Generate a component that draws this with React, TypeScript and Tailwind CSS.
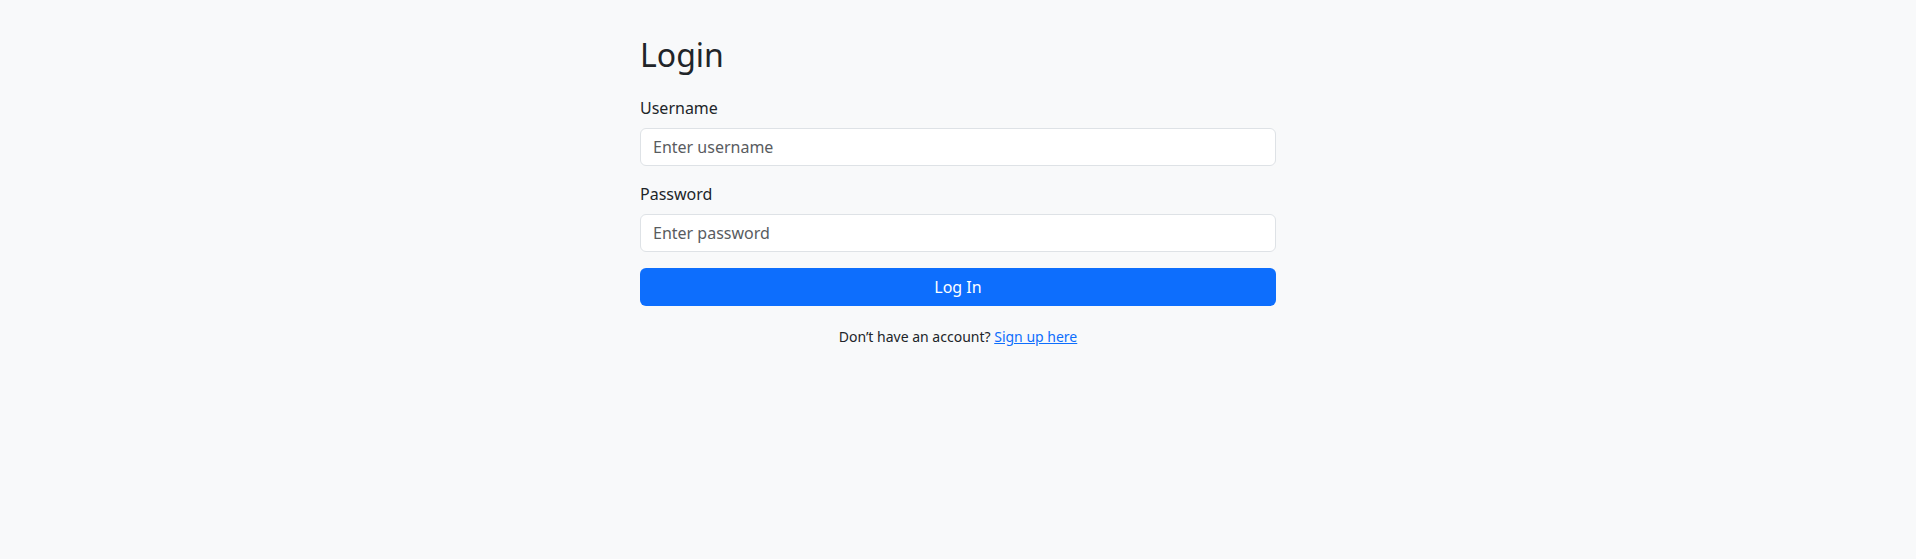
import React, { useState } from "react";

export default function App() {
  const [username, setUsername] = useState("");
  const [password, setPassword] = useState("");

  return (
    <div className="min-h-[559px] w-full bg-[#f8f9fa] text-[#212529] font-['Noto_Sans',sans-serif]">
      <div className="mx-auto w-[636px] pt-[36px]">
        <h2 className="mb-[22px] text-[32px] leading-[38px] font-normal">Login</h2>
        <form onSubmit={(e) => e.preventDefault()}>
          <div className="mb-4">
            <label htmlFor="username" className="mb-2 block text-base leading-6">
              Username
            </label>
            <input
              id="username"
              type="text"
              value={username}
              onChange={(e) => setUsername(e.target.value)}
              placeholder="Enter username"
              className="block h-[38px] w-full rounded-[6px] border border-[#dee2e6] bg-white px-3 text-base text-[#212529] outline-none placeholder:text-[#595c5f]"
            />
          </div>
          <div className="mb-4">
            <label htmlFor="password" className="mb-2 block text-base leading-6">
              Password
            </label>
            <input
              id="password"
              type="password"
              value={password}
              onChange={(e) => setPassword(e.target.value)}
              placeholder="Enter password"
              className="block h-[38px] w-full rounded-[6px] border border-[#dee2e6] bg-white px-3 text-base text-[#212529] outline-none placeholder:text-[#595c5f]"
            />
          </div>
          <button
            type="submit"
            className="block h-[38px] w-full rounded-[6px] bg-[#0d6efd] text-base text-white"
          >
            Log In
          </button>
        </form>
        <p className="mt-[20px] text-center text-sm leading-[21px]">
          Don’t have an account?{" "}
          <a href="#" className="text-[#0d6efd] underline">
            Sign up here
          </a>
        </p>
      </div>
    </div>
  );
}
